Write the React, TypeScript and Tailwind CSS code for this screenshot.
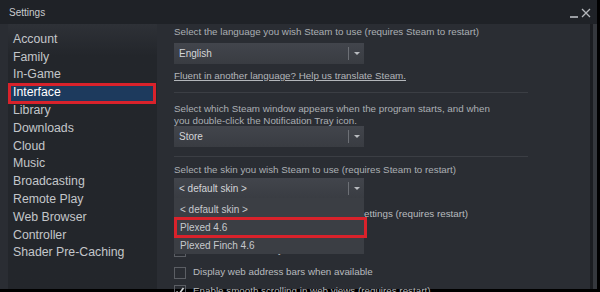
import React from "react";

const NAV = [
  "Account", "Family", "In-Game", "Interface", "Library", "Downloads", "Cloud",
  "Music", "Broadcasting", "Remote Play", "Web Browser", "Controller", "Shader Pre-Caching",
];

function Dropdown({ value }: { value: string }) {
  return (
    <div className="w-[190px] h-[21px] bg-linear-to-b from-[#42454c] to-[#393c42] flex items-center">
      <span className="flex-1 pl-[5px] text-[10px] text-[#d3d5d8]">{value}</span>
      <div className="w-px h-[13px] bg-[#6d7076]" />
      <div className="w-[15px] flex justify-center">
        <div className="w-0 h-0 border-l-[3px] border-r-[3px] border-t-[3px] border-l-transparent border-r-transparent border-t-[#b9bcc0]" />
      </div>
    </div>
  );
}

function Check({ text, checked = false, top }: { text: string; checked?: boolean; top: string }) {
  return (
    <div className={`flex items-center gap-[7px] h-[14px] ${top}`}>
      <div className="w-[12px] h-[12px] border border-[#5b5e64] flex items-center justify-center shrink-0">
        {checked && (
          <svg width="10" height="10" viewBox="0 0 10 10">
            <path d="M1.5 5.5 L4 8 L8.5 2" stroke="#d6d8db" strokeWidth="1.6" fill="none" />
          </svg>
        )}
      </div>
      <span className="text-[9.8px] text-[#b8bbbf] whitespace-nowrap">{text}</span>
    </div>
  );
}

export default function App() {
  return (
    <div className="w-[600px] h-[292px] bg-black overflow-hidden" style={{ fontFamily: '"Liberation Sans", Arial, sans-serif' }}>
      <div className="w-[597px] h-[289px] bg-[#2a2d33] flex flex-col">
        {/* title bar */}
        <div className="h-[24px] bg-[#1f2227] flex items-center justify-between pl-[9px] pr-[6px] shrink-0">
          <span className="text-[10px] text-[#c9cbce]">Settings</span>
          <div className="flex items-end gap-[3px] h-[12px]">
            <div className="w-[8px] h-[2px] bg-[#9a9da2]" />
            <svg width="10" height="10" viewBox="0 0 10 10">
              <path d="M1 1 L9 9 M9 1 L1 9" stroke="#b4b7bb" strokeWidth="1.3" />
            </svg>
          </div>
        </div>

        <div className="flex-1 flex min-h-0">
          {/* sidebar */}
          <div className="ml-[8px] w-[149px] bg-linear-to-b from-[#2e3137] to-[#23262b] to-[12%] pt-[6px]">
            {NAV.map((n) => (
              <div key={n} className="relative h-[17.8px] flex items-center pl-[5px]">
                {n === "Interface" && (
                  <>
                    <div className="absolute left-[2px] right-[4px] top-0 bottom-0 bg-[#1d3a5d]" />
                    <div className="absolute left-0 right-[1px] -top-[0.5px] -bottom-[3px] border-[3px] border-[#d9222b]" />
                  </>
                )}
                <span className={`relative text-[12.3px] leading-none ${n === "Interface" ? "text-white" : "text-[#c3c6ca]"}`}>{n}</span>
              </div>
            ))}
          </div>

          {/* content */}
          <div className="flex-1 pl-[17px] relative">
            <div className="mt-[1px] h-[14px] leading-[14px] text-[9.8px] text-[#abafb4]">
              Select the language you wish Steam to use (requires Steam to restart)
            </div>
            <div className="mt-[4px]"><Dropdown value="English" /></div>
            <div className="mt-[5px] h-[14px] leading-[14px] text-[9.8px] text-[#b3b6ba] underline">
              Fluent in another language? Help us translate Steam.
            </div>
            <div className="mt-[9px] h-px w-[354px] bg-[#3b3e44]" />
            <div className="mt-[9px] leading-[11.5px] text-[9.8px] text-[#abafb4] pt-[1px]">
              Select which Steam window appears when the program starts, and when<br />
              you double-click the Notification Tray icon.
            </div>
            <div className="mt-0"><Dropdown value="Store" /></div>
            <div className="mt-[9px] h-px w-[354px] bg-[#3b3e44]" />
            <div className="mt-[6px] h-[14px] leading-[14px] text-[9.8px] text-[#abafb4]">
              Select the skin you wish Steam to use (requires Steam to restart)
            </div>
            <div className="mt-[1px]"><Dropdown value="< default skin >" /></div>

            <Check top="mt-[8px]" text="Scale text and icons to match monitor settings (requires restart)" />
            <Check top="mt-[5.5px]" text="Enable DirectWrite" />
            <Check top="mt-[3px]" text="Show Steam overlay" />
            <Check top="mt-[8px]" text="Display web address bars when available" />
            <Check top="mt-[4.5px]" checked text="Enable smooth scrolling in web views (requires restart)" />

            {/* open skin list */}
            <div className="absolute left-[17px] top-[174px] w-[190px] h-[56px] bg-[#3b3e44] pt-[2px]">
              {["< default skin >", "Plexed 4.6", "Plexed Finch 4.6"].map((s) => (
                <div key={s} className="h-[18px] flex items-center pl-[6px] text-[10px] text-[#c6c9cd]">{s}</div>
              ))}
            </div>
            <div className="absolute left-[17px] top-[193px] w-[193px] h-[21px] border-[3px] border-[#d9222b]" />
          </div>

          {/* right edge */}
          <div className="w-[3px] bg-[#1b1d21]" />
          <div className="w-[4px] bg-[#35383d]" />
        </div>
      </div>
    </div>
  );
}
